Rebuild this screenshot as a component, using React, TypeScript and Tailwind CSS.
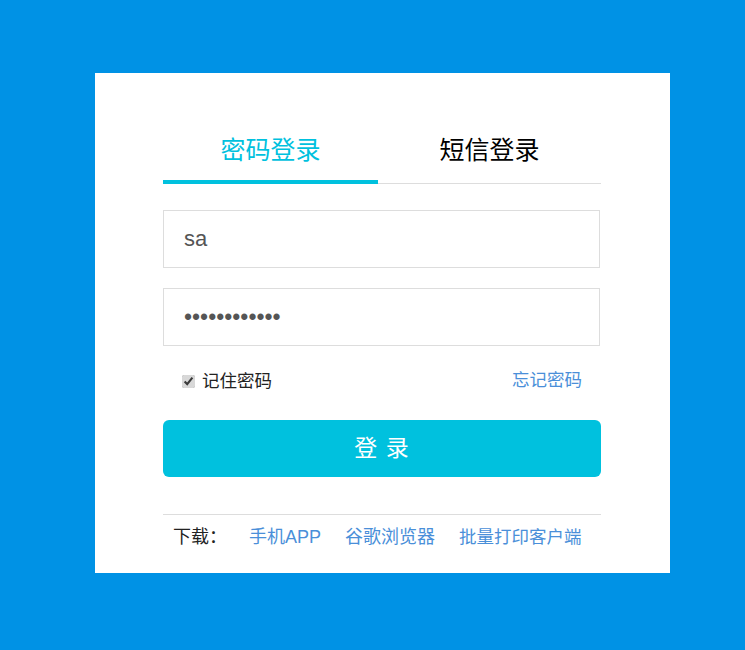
import React, { useState } from 'react'

const FONT = "font-['Liberation_Sans','Noto_Sans_CJK_SC',sans-serif]"

const App = () => {
  const [tab, setTab] = useState<'pwd' | 'sms'>('pwd')
  const [user, setUser] = useState('sa')
  const [pwd, setPwd] = useState('123456789012')
  const [remember, setRemember] = useState(true)

  return (
    <div className={`min-h-[650px] w-full bg-[#0092e5] pt-[73px] pl-[95px] ${FONT}`}>
      <div className="w-[575px] h-[500px] bg-white pl-[68px] pr-[69px] pt-[40px]">
        {/* Tabs */}
        <div className="flex border-b border-[#dddddd]">
          <button
            onClick={() => setTab('pwd')}
            className={`w-[215px] h-[71px] text-[25px] pt-[8px] border-b-[4px] -mb-[1px] ${
              tab === 'pwd' ? 'text-[#00c1de] border-[#00c1de]' : 'text-black border-transparent'
            }`}
          >
            密码登录
          </button>
          <button
            onClick={() => setTab('sms')}
            className={`flex-1 h-[71px] text-[25px] pt-[8px] border-b-[4px] -mb-[1px] ${
              tab === 'sms' ? 'text-[#00c1de] border-[#00c1de]' : 'text-black border-transparent'
            }`}
          >
            短信登录
          </button>
        </div>

        {/* Inputs */}
        <input
          value={user}
          onChange={e => setUser(e.target.value)}
          className="mt-[26px] block w-[437px] h-[58px] border border-[#dddddd] px-[20px] text-[22px] text-[#555555] outline-none"
        />
        <input
          type="password"
          value={pwd}
          onChange={e => setPwd(e.target.value)}
          className="mt-[20px] block w-[437px] h-[58px] border border-[#dddddd] px-[20px] text-[23px] text-[#555555] outline-none"
        />

        {/* Remember / forgot */}
        <div className="flex items-center justify-between pl-[19px] pr-[19px] mt-[22px] h-[24px]">
          <label className="flex items-center gap-[7px] text-[17.5px] text-[#222222] mt-[3px]">
            <input
              type="checkbox"
              checked={remember}
              onChange={e => setRemember(e.target.checked)}
              className="w-[13px] h-[13px] m-0 accent-[#d8d8d8]"
            />
            记住密码
          </label>
          <a href="#" className="text-[17.5px] text-[#4a8fd9]">忘记密码</a>
        </div>

        {/* Login button */}
        <button className="mt-[28px] w-[438px] h-[57px] rounded-[6px] bg-[#00c1de] text-white text-[23px] tracking-[1px]">
          登 录
        </button>

        {/* Downloads */}
        <div className="mt-[37px] border-t border-[#dddddd] flex items-center h-[44px] pl-[10px] pt-[2px] text-[18px]">
          <span className="text-[#222222] w-[76px]">下载：</span>
          <a href="#" className="text-[#4a8fd9] mr-[24px]">手机APP</a>
          <a href="#" className="text-[#4a8fd9] mr-[24px]">谷歌浏览器</a>
          <a href="#" className="text-[#4a8fd9] text-[17.5px]">批量打印客户端</a>
        </div>
      </div>
    </div>
  )
}

export default App
